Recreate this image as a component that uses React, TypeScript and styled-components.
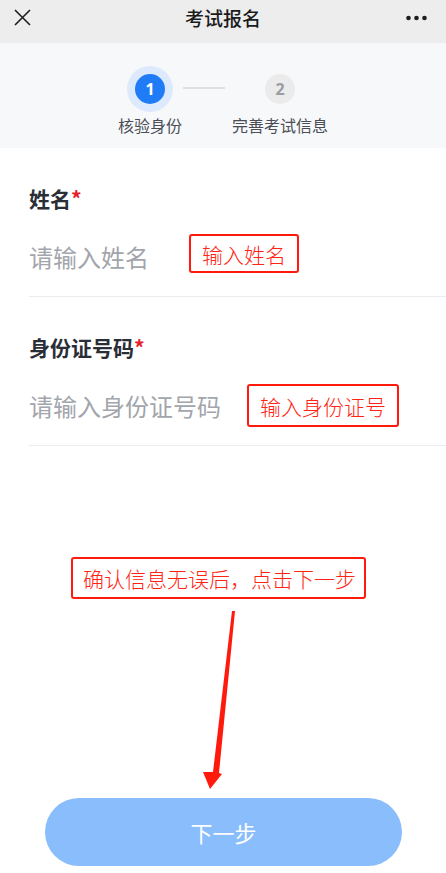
import styled, { createGlobalStyle } from "styled-components"

const GlobalStyle = createGlobalStyle`
  html, body {
    margin: 0;
    padding: 0;
    background: #ffffff;
  }
  body {
    font-family: "Noto Sans CJK SC", "Noto Sans", sans-serif;
  }
`

const Page = styled.div`
  width: 446px;
  height: 873px;
  display: flex;
  flex-direction: column;
  background: #ffffff;
  overflow: hidden;
`

const Header = styled.div`
  height: 43px;
  flex-shrink: 0;
  background: #ededed;
  display: grid;
  grid-template-columns: 1fr auto 1fr;
  align-items: start;
`

const HeaderCell = styled.div<{ $align: "left" | "center" | "right" }>`
  height: 35px;
  display: flex;
  align-items: center;
  justify-content: ${(p) =>
    p.$align === "left" ? "flex-start" : p.$align === "right" ? "flex-end" : "center"};
  padding: ${(p) => (p.$align === "left" ? "0 0 0 14px" : p.$align === "right" ? "0 19px 0 0" : "0")};
`

const Title = styled.div`
  font-size: 19px;
  font-weight: 500;
  color: #1b1b1b;
  line-height: 35px;
`

const Stepper = styled.div`
  height: 105px;
  flex-shrink: 0;
  box-sizing: border-box;
  background: #f7f8fa;
  padding: 23px 0 12px;
  display: flex;
  justify-content: center;
  align-items: flex-start;
`

const Step = styled.div`
  display: flex;
  flex-direction: column;
  align-items: center;
  gap: 2px;
`

const Halo = styled.div<{ $active?: boolean }>`
  width: 46px;
  height: 46px;
  border-radius: 50%;
  background: ${(p) => (p.$active ? "#dde9fc" : "transparent")};
  display: flex;
  align-items: center;
  justify-content: center;
`

const Dot = styled.div<{ $active?: boolean }>`
  width: 30px;
  height: 30px;
  border-radius: 50%;
  background: ${(p) => (p.$active ? "#1f7cf6" : "#ebebeb")};
  color: ${(p) => (p.$active ? "#ffffff" : "#9a9ca3")};
  font-family: "Noto Sans", "Roboto", sans-serif;
  font-size: 16px;
  font-weight: 700;
  display: flex;
  align-items: center;
  justify-content: center;
`

const StepLabel = styled.div`
  font-size: 16px;
  line-height: 22px;
  color: #4a4d55;
  white-space: nowrap;
`

const Connector = styled.div`
  width: 42px;
  height: 2px;
  background: #dedfe2;
  margin: 21px 7px 0 1px;
`

const Field = styled.div`
  margin-left: 29px;
  padding: 37px 0 14px;
  border-bottom: 1px solid #ebecef;
`

const Label = styled.div`
  font-size: 21px;
  font-weight: 700;
  line-height: 26px;
  color: #2a2e36;
`

const Star = styled.span`
  color: #e5202a;
  font-weight: 700;
`

const InputRow = styled.div`
  margin-top: 21px;
  height: 50px;
  display: flex;
  align-items: flex-start;
`

const Placeholder = styled.div`
  font-size: 24px;
  line-height: 50px;
  color: #a2a5ab;
  white-space: nowrap;
`

const Annotation = styled.div<{ $left: number; $top: number; $h: number }>`
  margin-left: ${(p) => p.$left}px;
  margin-top: ${(p) => p.$top}px;
  height: ${(p) => p.$h}px;
  box-sizing: border-box;
  padding: 0 11px;
  border: 2px solid #ff1a0d;
  border-radius: 3px;
  display: flex;
  align-items: center;
  font-size: 21px;
  font-weight: 300;
  color: #ff2414;
  white-space: nowrap;
  background: #ffffff;
`

const Hint = styled(Annotation)`
  align-self: flex-start;
  padding: 0 8px 0 10px;
`

const ArrowArea = styled.svg`
  display: block;
  flex-shrink: 0;
`

const NextButton = styled.button`
  margin: 0 44px 0 45px;
  height: 68px;
  flex-shrink: 0;
  border: none;
  border-radius: 34px;
  background: #89bdfb;
  color: #ffffff;
  font-family: "Noto Sans CJK SC", "Noto Sans", sans-serif;
  font-size: 22px;
  font-weight: 400;
`

const CloseIcon = () => (
  <svg width="17" height="17" viewBox="0 0 17 17">
    <path d="M1 1 L16 16 M16 1 L1 16" stroke="#1e1e1e" strokeWidth="1.6" fill="none" />
  </svg>
)

const MoreIcon = () => (
  <svg width="21" height="6" viewBox="0 0 21 6">
    <circle cx="2.5" cy="3" r="2.3" fill="#1e1e1e" />
    <circle cx="10.5" cy="3" r="2.3" fill="#1e1e1e" />
    <circle cx="18.5" cy="3" r="2.3" fill="#1e1e1e" />
  </svg>
)

export default function App() {
  return (
    <Page>
      <GlobalStyle />
      <Header>
        <HeaderCell $align="left">
          <CloseIcon />
        </HeaderCell>
        <HeaderCell $align="center">
          <Title>考试报名</Title>
        </HeaderCell>
        <HeaderCell $align="right">
          <MoreIcon />
        </HeaderCell>
      </Header>

      <Stepper>
        <Step>
          <Halo $active>
            <Dot $active>1</Dot>
          </Halo>
          <StepLabel>核验身份</StepLabel>
        </Step>
        <Connector />
        <Step>
          <Halo>
            <Dot>2</Dot>
          </Halo>
          <StepLabel>完善考试信息</StepLabel>
        </Step>
      </Stepper>

      <Field>
        <Label>
          姓名<Star>*</Star>
        </Label>
        <InputRow>
          <Placeholder>请输入姓名</Placeholder>
          <Annotation $left={40} $top={2} $h={39}>输入姓名</Annotation>
        </InputRow>
      </Field>

      <Field>
        <Label>
          身份证号码<Star>*</Star>
        </Label>
        <InputRow>
          <Placeholder>请输入身份证号码</Placeholder>
          <Annotation $left={26} $top={3} $h={43}>输入身份证号</Annotation>
        </InputRow>
      </Field>

      <Hint $left={71} $top={111} $h={42}>确认信息无误后，点击下一步</Hint>

      <ArrowArea width="446" height="199" viewBox="0 0 446 199">
        <polygon
          points="232,12 235,12 219,174 222,175 210,190 203,173 213,173"
          fill="#ff1a0d"
        />
      </ArrowArea>

      <NextButton>下一步</NextButton>
    </Page>
  )
}
